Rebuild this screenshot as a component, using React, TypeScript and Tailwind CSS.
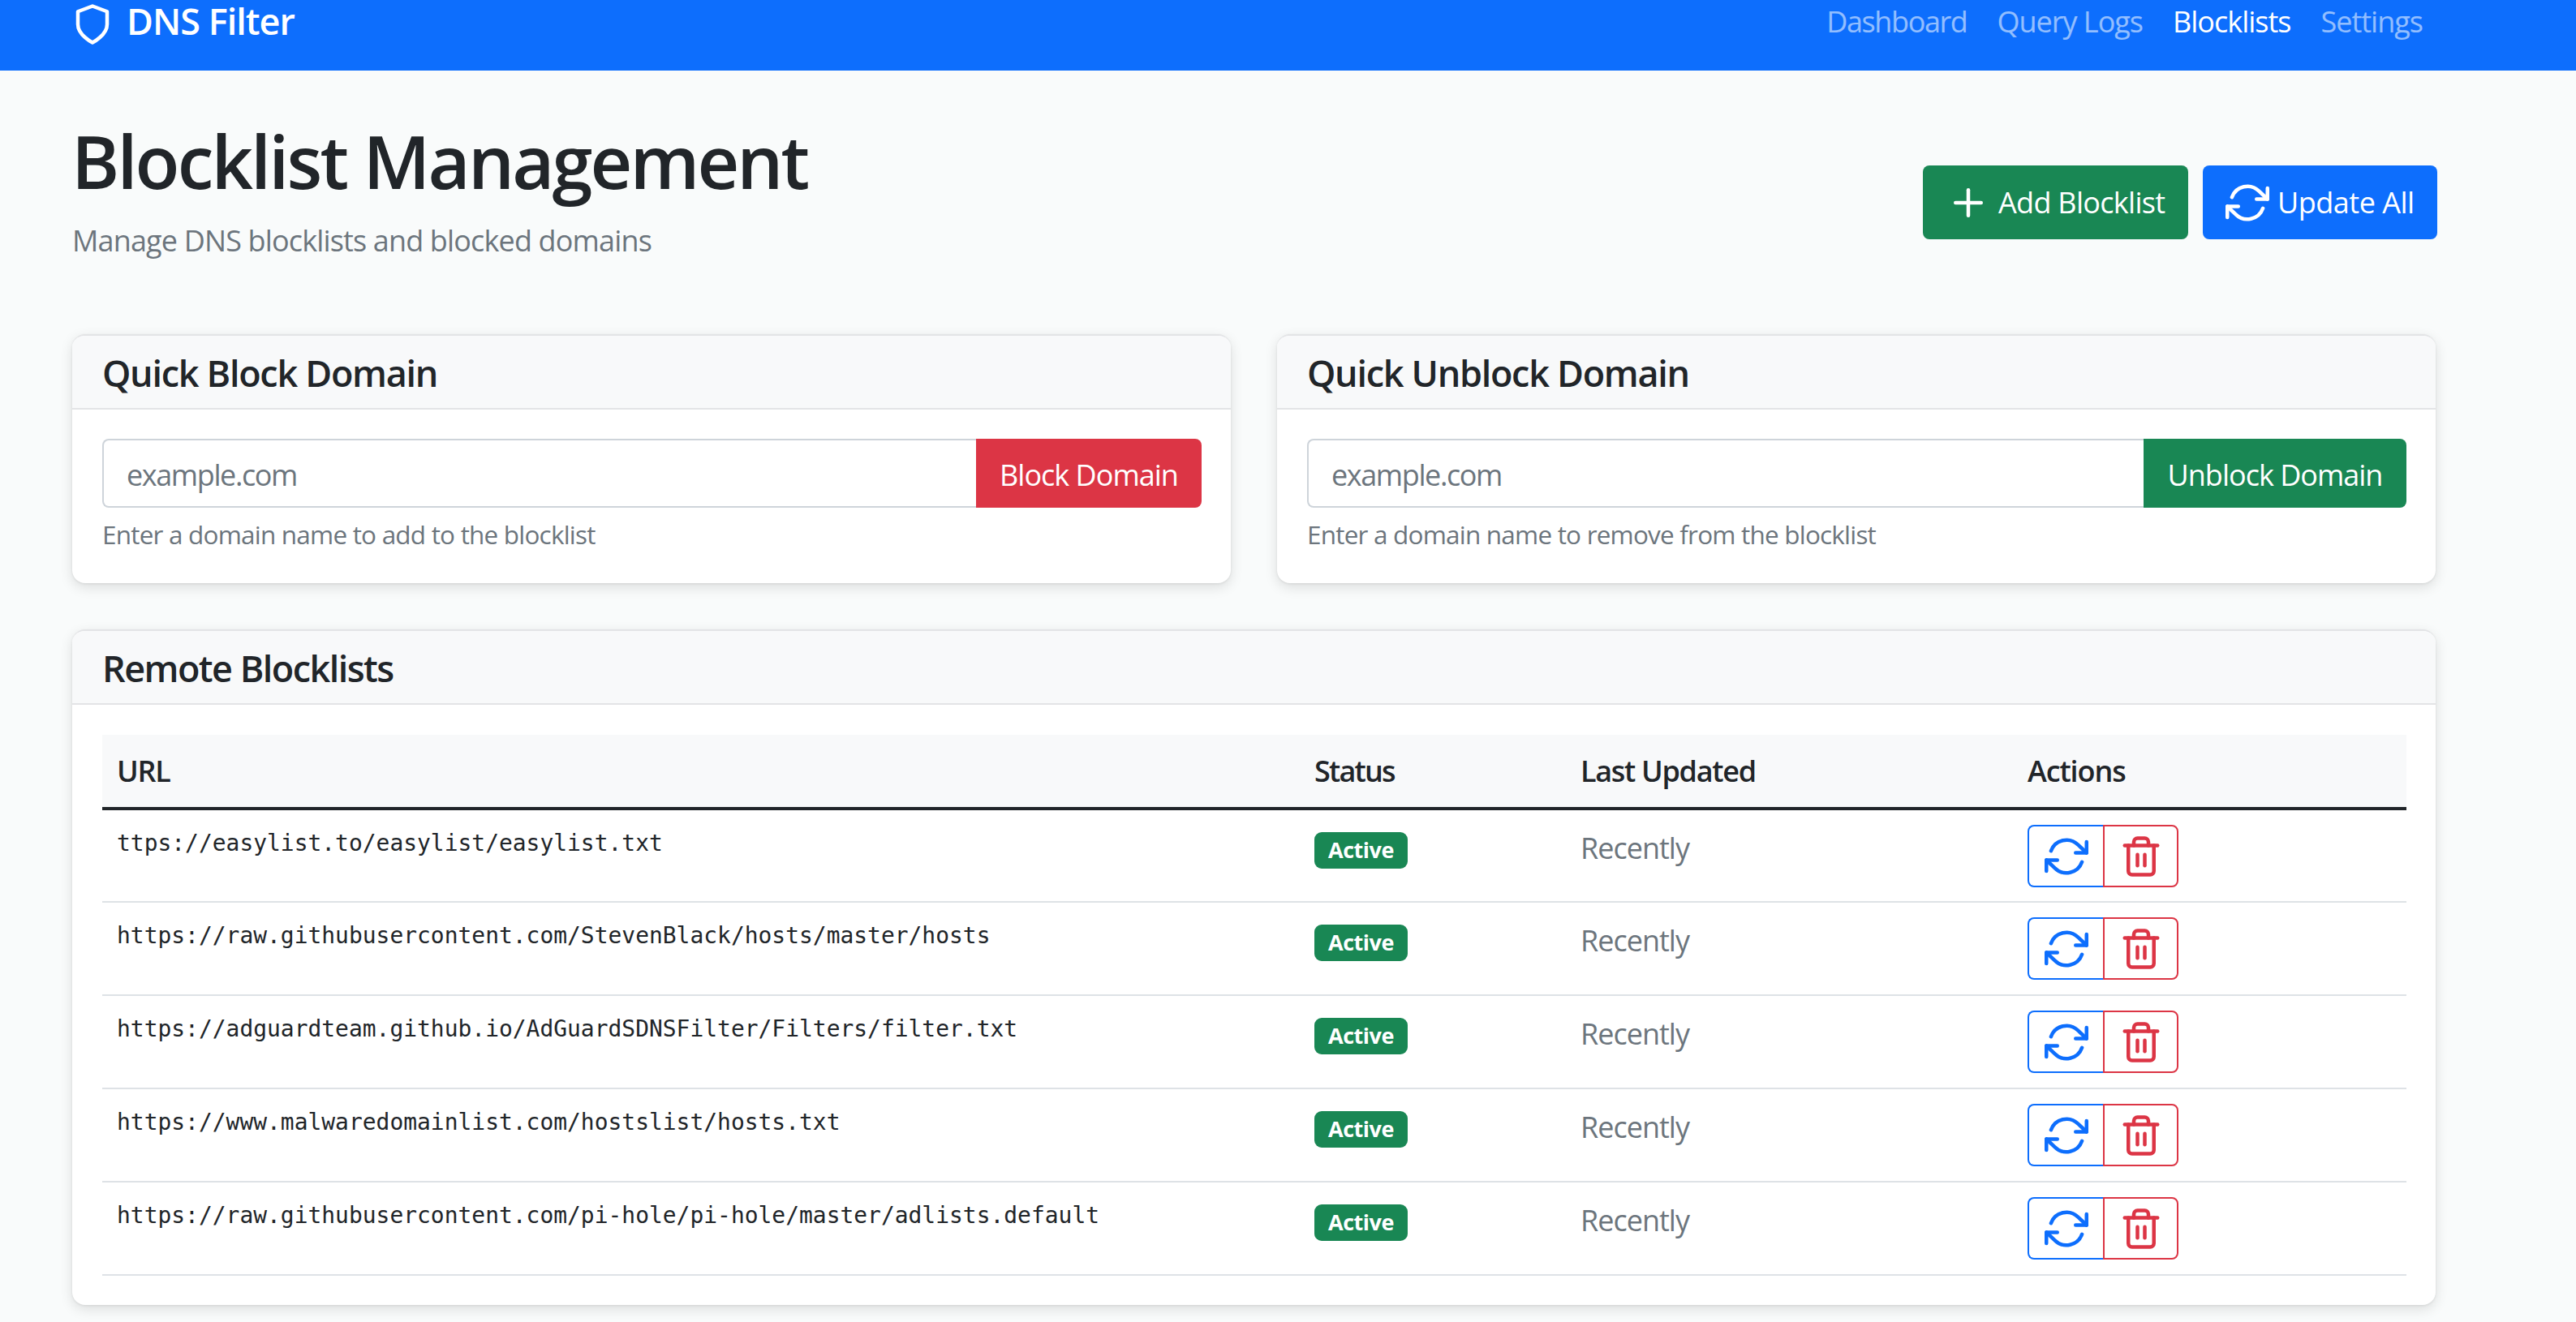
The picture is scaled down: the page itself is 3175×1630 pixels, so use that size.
import React from 'react';

const sans = 'font-["Open_Sans","Noto_Sans",sans-serif]';
const cardShell = 'bg-white rounded-[16px] border-t-2 border-[#e3e4e6] shadow-[0_5px_16px_rgba(0,0,0,0.12),0_1px_3px_rgba(0,0,0,0.08)] overflow-hidden';

const RefreshIcon = ({ className }: { className: string }) => (
    <svg viewBox="0 0 24 24" fill="none" stroke="currentColor" strokeWidth="2" strokeLinecap="round" strokeLinejoin="round" className={className}>
        <polyline points="23 4 23 10 17 10" />
        <polyline points="1 20 1 14 7 14" />
        <path d="M3.51 9a9 9 0 0 1 14.85-3.36L23 10M1 14l4.64 4.36A9 9 0 0 0 20.49 15" />
    </svg>
);

const TrashIcon = ({ className }: { className: string }) => (
    <svg viewBox="0 0 24 24" fill="none" stroke="currentColor" strokeWidth="2" strokeLinecap="round" strokeLinejoin="round" className={className}>
        <polyline points="3 6 5 6 21 6" />
        <path d="M19 6v14a2 2 0 0 1-2 2H7a2 2 0 0 1-2-2V6m3 0V4a2 2 0 0 1 2-2h4a2 2 0 0 1 2 2v2" />
        <line x1="10" y1="11" x2="10" y2="17" />
        <line x1="14" y1="11" x2="14" y2="17" />
    </svg>
);

const blocklists = [
    'ttps://easylist.to/easylist/easylist.txt',
    'https://raw.githubusercontent.com/StevenBlack/hosts/master/hosts',
    'https://adguardteam.github.io/AdGuardSDNSFilter/Filters/filter.txt',
    'https://www.malwaredomainlist.com/hostslist/hosts.txt',
    'https://raw.githubusercontent.com/pi-hole/pi-hole/master/adlists.default',
];

const CardHeader = ({ title, tracking }: { title: string; tracking: string }) => (
    <div className="h-[91px] bg-[#f8f9fa] border-b-2 border-[#e3e4e6] pl-[37px] pr-[36px] pt-[2px] flex items-center">
        <h5 className={`text-[45px] font-semibold text-[#212529] leading-none ${tracking}`}>{title}</h5>
    </div>
);

const QuickCard = ({ title, button, help, buttonClass }: { title: string; button: string; help: string; buttonClass: string }) => (
    <div className={`flex-1 h-[307px] ${cardShell}`}>
        <CardHeader title={title} tracking="tracking-[-1.3px]" />
        <div className="pl-[37px] pr-[36px] pt-[36px]">
            <div className="flex h-[85px]">
                <input
                    placeholder="example.com"
                    className="flex-1 min-w-0 bg-white border-2 border-r-0 border-[#ced4da] rounded-l-[8px] pl-[28px] pr-[27px] pt-[5px] text-[36px] tracking-[-1.4px] text-[#212529] placeholder:text-[#6c757d] outline-none"
                />
                <button className={`${buttonClass} text-white text-[36px] tracking-[-1px] rounded-r-[8px] pt-[5px]`}>{button}</button>
            </div>
            <p className="mt-[9px] text-[31.5px] leading-[47px] tracking-[-0.8px] text-[#6c757d]">{help}</p>
        </div>
    </div>
);

export default function App() {
    return (
        <div className={`${sans} w-full h-[1630px] overflow-hidden bg-[#f9fbfb]`}>
            <nav className="h-[87px] bg-[#0d6efd] pl-[87px] pr-[189px] flex items-start justify-between">
                <div className="flex items-center h-[54px] mt-[3px] gap-[15px] text-white">
                    <svg viewBox="0 0 24 24" fill="none" stroke="currentColor" strokeWidth="2" strokeLinecap="round" strokeLinejoin="round" className="w-[54px] h-[54px]">
                        <path d="M12 22s8-4 8-10V5l-8-3-8 3v7c0 6 8 10 8 10z" />
                    </svg>
                    <span className="text-[45px] font-semibold tracking-[-1px] leading-none -mt-[10px]">DNS Filter</span>
                </div>
                <div className="flex gap-[37px] text-[36px] tracking-[-1px] leading-[54px] text-white/55">
                    <a className="tracking-[-1.4px]">Dashboard</a>
                    <a>Query Logs</a>
                    <a className="text-white">Blocklists</a>
                    <a>Settings</a>
                </div>
            </nav>

            <main className="pl-[89px] pr-[173px]">
                <div className="flex items-start justify-between h-[325px] -mr-[2px]">
                    <div>
                        <h1 className="mt-[57px] -ml-[1px] text-[90px] leading-[108px] font-semibold tracking-[-2.9px] text-[#212529]">Blocklist Management</h1>
                        <p className="mt-[18px] text-[36px] leading-[54px] tracking-[-0.85px] text-[#6c757d]">Manage DNS blocklists and blocked domains</p>
                    </div>
                    <div className="flex gap-[18px] mt-[117px] text-white text-[36px]">
                        <button className="h-[91px] w-[327px] bg-[#198754] rounded-[8px] flex items-center pl-[29px] gap-[10px] tracking-[-0.7px]">
                            <svg viewBox="0 0 24 24" fill="none" stroke="currentColor" strokeWidth="2" strokeLinecap="round" strokeLinejoin="round" className="w-[54px] h-[54px]">
                                <line x1="12" y1="5" x2="12" y2="19" />
                                <line x1="5" y1="12" x2="19" y2="12" />
                            </svg>
                            Add Blocklist
                        </button>
                        <button className="h-[91px] w-[289px] bg-[#0d6efd] rounded-[8px] flex items-center pl-[28px] gap-[10px] tracking-[-0.5px]">
                            <RefreshIcon className="w-[54px] h-[54px]" />
                            Update All
                        </button>
                    </div>
                </div>

                <div className="flex gap-[57px]">
                    <QuickCard title="Quick Block Domain" button="Block Domain" help="Enter a domain name to add to the blocklist" buttonClass="bg-[#dc3545] w-[278px]" />
                    <QuickCard title="Quick Unblock Domain" button="Unblock Domain" help="Enter a domain name to remove from the blocklist" buttonClass="bg-[#198754] w-[324px]" />
                </div>

                <div className={`mt-[57px] h-[833px] ${cardShell}`}>
                    <CardHeader title="Remote Blocklists" tracking="tracking-[-1.55px]" />
                    <div className="pl-[37px] pr-[36px] pt-[37px]">
                        <table className="w-full table-fixed border-collapse text-[36px] tracking-[-1px]">
                            <colgroup>
                                <col className="w-[1476px]" />
                                <col className="w-[328px]" />
                                <col className="w-[551px]" />
                                <col />
                            </colgroup>
                            <thead>
                                <tr className="h-[91px] bg-[#f8f9fa] border-b-4 border-[#212529] text-[#212529]">
                                    <th className="px-[18px] text-left font-semibold tracking-[-1.3px]">URL</th>
                                    <th className="px-[18px] text-left font-semibold tracking-[-1.8px]">Status</th>
                                    <th className="px-[18px] text-left font-semibold tracking-[-1.3px]">Last Updated</th>
                                    <th className="px-[18px] text-left font-semibold tracking-[-1.1px]">Actions</th>
                                </tr>
                            </thead>
                            <tbody>
                                {blocklists.map((url) => (
                                    <tr key={url} className="h-[115px] border-b-2 border-[#dee2e6]">
                                        <td className="px-[18px] align-top pt-[10px]">
                                            <code className='font-["DejaVu_Sans_Mono",monospace] text-[27.95px] tracking-normal text-[#212529]'>{url}</code>
                                        </td>
                                        <td className="px-[18px] align-top pt-[27px]">
                                            <span className="flex items-center justify-center w-[115px] h-[45px] rounded-[9px] bg-[#198754] text-white text-[27px] font-bold tracking-[-0.5px]">Active</span>
                                        </td>
                                        <td className="px-[18px] align-top pt-[20px] leading-[54px] text-[#6c757d]">Recently</td>
                                        <td className="px-[18px] align-top pt-[18px]">
                                            <div className="flex w-[186px] h-[77px]">
                                                <button className="w-[93px] flex items-center justify-center border-2 border-r-0 border-[#0d6efd] text-[#0d6efd] rounded-l-[8px]">
                                                    <RefreshIcon className="w-[54px] h-[54px]" />
                                                </button>
                                                <button className="w-[93px] flex items-center justify-center border-2 border-[#dc3545] text-[#dc3545] rounded-r-[8px]">
                                                    <TrashIcon className="w-[54px] h-[54px]" />
                                                </button>
                                            </div>
                                        </td>
                                    </tr>
                                ))}
                            </tbody>
                        </table>
                    </div>
                </div>
            </main>
        </div>
    );
}
